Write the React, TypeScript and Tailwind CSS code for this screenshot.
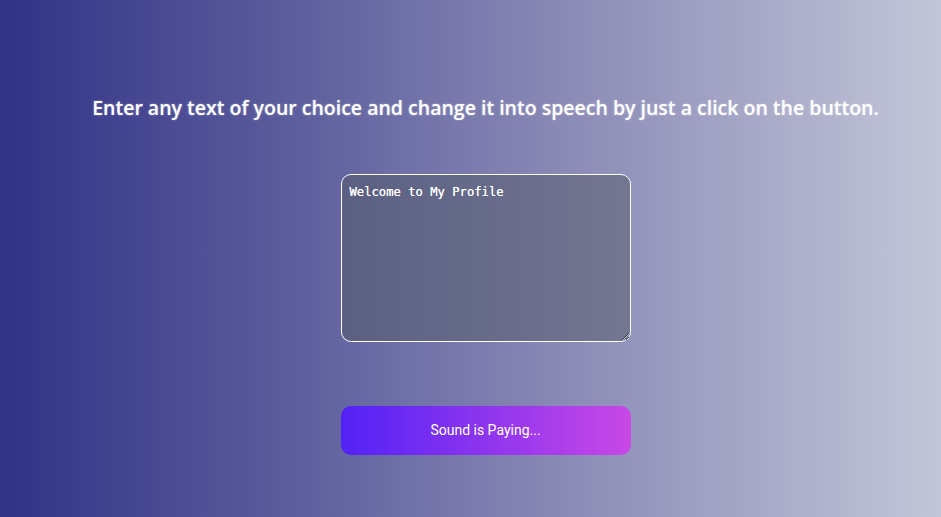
import React from "react";

export default function App() {
  return (
    <div className="min-h-[517px] w-full bg-[linear-gradient(to_right,#313286,#5a5c9c_30%,#8a8ab6_60%,#c3c6d8)] flex flex-col items-center pt-[94px] pl-[30px]">
      <h1 className="text-white text-[19.5px] font-semibold leading-[28px] font-['Open_Sans',sans-serif] [text-shadow:0_0_2px_rgba(255,255,255,0.5)]">
        Enter any text of your choice and change it into speech by just a click on the button.
      </h1>
      <textarea
        defaultValue="Welcome to My Profile"
        className="mt-[52px] w-[290px] h-[168px] rounded-[10px] border border-white bg-[rgba(82,90,101,0.5)] px-2 py-[9px] text-[12.2px] leading-[16px] text-white font-['DejaVu_Sans_Mono',monospace] [text-shadow:0_0_0.6px_#fff] outline-none"
      />
      <button className="mt-[64px] w-[290px] h-[49px] rounded-[10px] bg-[linear-gradient(to_right,#5222f6,#c948e6)] text-white text-[14px] font-['Roboto',sans-serif]">
        Sound is Paying...
      </button>
    </div>
  );
}
